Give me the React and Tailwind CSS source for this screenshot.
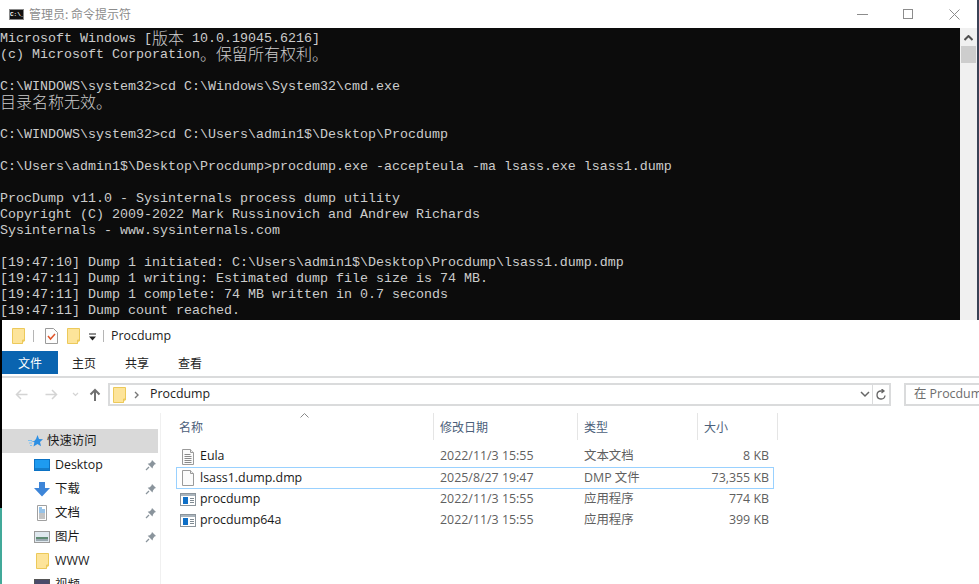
const mono = "font-['Liberation_Mono','Noto_Sans_CJK_SC',monospace]";

function C({ children }) {
  return <span className="font-['Noto_Sans_CJK_SC',sans-serif] text-[16px] leading-[0px] font-light align-[-1.5px]">{children}</span>;
}

const Line = ({ children }) => (
  <div className="h-4 leading-4 whitespace-pre">{children || " "}</div>
);

function Folder() {
  return (
    <svg width="13" height="16" viewBox="0 0 13 16" className="shrink-0 block">
      <path d="M.5.500h12v12.500h-2v2.500h-10z" fill="#fde49a" stroke="#ecc95a" />
      <path d="M10.500 15.500v-3.500h2" fill="#f3cf62" stroke="#ecc95a" />
    </svg>
  );
}

function Pin() {
  return (
    <svg width="12" height="12" viewBox="0 0 12 12" className="shrink-0">
      <path d="M7 1l4 4-1.500.5L8 7.500 7.500 9.500 2.700 4.700 4.800 4.200 6.500 2.500z" fill="#8a949c" />
      <path d="M4 8L1 11" stroke="#8a949c" strokeWidth="1.300" />
    </svg>
  );
}

function DocIcon({ lines }) {
  return (
    <svg width="14" height="16" viewBox="0 0 14 16" className="shrink-0">
      <path d="M1.500 .5h8l3 3v12h-11z" fill="#fbfbfb" stroke="#9a9a9a" />
      <path d="M9.500 .5v3h3" fill="#eee" stroke="#9a9a9a" />
      {lines && <path d="M3.500 5.500h6M3.500 7.500h7M3.500 9.500h7M3.500 11.500h7M3.500 13.500h7" stroke="#8a8a8a" />}
    </svg>
  );
}

function ExeIcon() {
  return (
    <svg width="16" height="13" viewBox="0 0 16 13" className="shrink-0">
      <rect x=".5" y=".5" width="15" height="12" fill="#fff" stroke="#8b949b" />
      <rect x="1" y="1" width="14" height="2" fill="#aab4bc" />
      <rect x="3" y="4" width="5" height="7" fill="#0f6fc6" />
      <path d="M10 5.500h4M10 7.500h4M10 9.500h4" stroke="#7f8a92" />
    </svg>
  );
}

const files = [
  ["Eula", "2022/11/3 15:55", "文本文档", "8 KB", "txt"],
  ["lsass1.dump.dmp", "2025/8/27 19:47", "DMP 文件", "73,355 KB", "dmp"],
  ["procdump", "2022/11/3 15:55", "应用程序", "774 KB", "exe"],
  ["procdump64a", "2022/11/3 15:55", "应用程序", "399 KB", "exe"],
];

function Nav({ icon, label, pin, active }) {
  return (
    <div className={`h-6 w-[156px] flex items-center ${active ? "bg-[#d9d9d9] pl-[26px]" : "pl-[32px]"}`}>
      <span className={`${active ? "w-[19px]" : "w-[21px]"} flex items-center`}>{icon}</span>
      <span className="flex-1 text-[#1a1a1a] text-[12.4px] leading-6 whitespace-nowrap">{label}</span>
      {pin && <span className="mr-px"><Pin /></span>}
    </div>
  );
}

export default function App() {
  return (
    <div className="w-[979px] h-[584px] overflow-hidden bg-white font-['Open_Sans','Noto_Sans_CJK_SC',sans-serif]">
      <div className="flex h-[320px]">
        <div className="w-[977px] flex flex-col bg-white">
          <div className="h-[28px] flex items-center shrink-0">
            <div className="ml-[9px] w-[15px] h-[11px] bg-[#111] border border-[#888] text-white text-[6px] leading-[9px] font-bold font-['Liberation_Mono',monospace] overflow-hidden">
              C:\_
            </div>
            <span className="ml-[5px] text-[12px] text-[#8c8c8c] font-['Noto_Sans_CJK_SC',sans-serif]">管理员: 命令提示符</span>
            <div className="ml-auto flex items-center">
              <div className="w-[11px] h-px bg-[#8c8c8c] mr-[35px]" />
              <div className="w-[10px] h-[10px] border border-[#8c8c8c] mr-[36px]" />
              <svg width="11" height="11" viewBox="0 0 11 11" className="mr-[17px]">
                <path d="M.5.500l10 10M10.500.500l-10 10" stroke="#8c8c8c" />
              </svg>
            </div>
          </div>
          <div className="flex-1 flex min-h-0">
            <div className={`w-[960px] bg-[#0c0c0c] text-[#cccccc] text-[13.33px] pt-[3px] overflow-hidden ${mono}`}>
              <Line>Microsoft Windows [<C>版本</C> 10.0.19045.6216]</Line>
              <Line>(c) Microsoft Corporation<C>。保留所有权利。</C></Line>
              <Line />
              <Line>{"C:\\WINDOWS\\system32>cd C:\\Windows\\System32\\cmd.exe"}</Line>
              <Line><C>目录名称无效。</C></Line>
              <Line />
              <Line>{"C:\\WINDOWS\\system32>cd C:\\Users\\admin1$\\Desktop\\Procdump"}</Line>
              <Line />
              <Line>{"C:\\Users\\admin1$\\Desktop\\Procdump>procdump.exe -accepteula -ma lsass.exe lsass1.dump"}</Line>
              <Line />
              <Line>ProcDump v11.0 - Sysinternals process dump utility</Line>
              <Line>Copyright (C) 2009-2022 Mark Russinovich and Andrew Richards</Line>
              <Line>Sysinternals - www.sysinternals.com</Line>
              <Line />
              <Line>{"[19:47:10] Dump 1 initiated: C:\\Users\\admin1$\\Desktop\\Procdump\\lsass1.dump.dmp"}</Line>
              <Line>[19:47:11] Dump 1 writing: Estimated dump file size is 74 MB.</Line>
              <Line>[19:47:11] Dump 1 complete: 74 MB written in 0.7 seconds</Line>
              <Line>[19:47:11] Dump count reached.</Line>
            </div>
            <div className="w-[17px] bg-[#f0f0f0] flex flex-col items-center">
              <svg width="9" height="6" viewBox="0 0 9 6" className="mt-[7px]">
                <path d="M.5 5L4.500 1l4 4" fill="none" stroke="#505050" strokeWidth="2" />
              </svg>
              <div className="mt-[5px] w-[15px] h-[17px] bg-[#cdcdcd]" />
            </div>
          </div>
        </div>
        <div className="flex-1 bg-[#3b4256]" />
      </div>

      <div className="flex h-[264px]">
        <div className="w-[2px] flex flex-col">
          <div className="h-[188px] bg-black" />
          <div className="flex-1 bg-[#41a999]" />
        </div>
        <div className="flex-1 min-w-0 flex flex-col bg-white">
          <div className="h-[31px] flex items-center shrink-0">
            <span className="ml-[10px]"><Folder /></span>
            <div className="ml-[8px] w-px h-3 bg-[#b5b5b5]" />
            <span className="ml-[11px]">
              <svg width="13" height="16" viewBox="0 0 13 16" className="block">
                <path d="M.5 .5h8l4 4v11h-12z" fill="#fdfdfd" stroke="#9a9a9a" />
                <path d="M3 8l2.500 3 4.500-5" fill="none" stroke="#e0552a" strokeWidth="1.500" />
              </svg>
            </span>
            <span className="ml-[9px]"><Folder /></span>
            <svg width="9" height="9" viewBox="0 0 9 9" className="ml-[8px] mt-[3px]">
              <path d="M1 1h7" stroke="#222" />
              <path d="M1 3.500h7L4.500 7.500z" fill="#222" />
            </svg>
            <div className="ml-[6px] w-px h-3 bg-[#b5b5b5]" />
            <span className="ml-[7px] mt-px text-[12.4px] text-[#222]">Procdump</span>
          </div>
          <div className="h-[23px] flex items-center shrink-0 text-[12px] text-[#222] font-['Noto_Sans_CJK_SC',sans-serif]">
            <div className="w-[56px] h-full bg-[#0a64b0] text-white flex items-center justify-center">文件</div>
            <span className="ml-[14px]">主页</span>
            <span className="ml-[29px]">共享</span>
            <span className="ml-[29px]">查看</span>
          </div>
          <div className="h-[2px] mt-[2px] bg-[#dadbdc] shrink-0" />
          <div className="h-[23px] mt-[5px] flex items-center shrink-0">
            <svg width="13" height="11" viewBox="0 0 13 11" className="ml-[13px]">
              <path d="M12.500 5.500h-11M6 1L1.500 5.500 6 10" fill="none" stroke="#d4d4d4" strokeWidth="1.500" />
            </svg>
            <svg width="13" height="11" viewBox="0 0 13 11" className="ml-[17px]">
              <path d="M.5 5.500h11M7 1l4.500 4.500L7 10" fill="none" stroke="#d4d4d4" strokeWidth="1.500" />
            </svg>
            <svg width="7" height="5" viewBox="0 0 7 5" className="ml-[14px]">
              <path d="M1 1l2.500 2.500L6 1" fill="none" stroke="#d4d4d4" strokeWidth="1.200" />
            </svg>
            <svg width="12" height="13" viewBox="0 0 12 13" className="ml-[10px]">
              <path d="M6 13V2M1.500 6.500L6 2l4.500 4.500" fill="none" stroke="#707070" strokeWidth="2" />
            </svg>
            <div className="ml-[7px] w-[783px] h-full border-2 border-[#dadbdc] flex items-center shrink-0">
              <span className="ml-[3px]"><Folder /></span>
              <svg width="5" height="8" viewBox="0 0 5 8" className="ml-[8px]">
                <path d="M1 1l3 3-3 3" fill="none" stroke="#777" strokeWidth="1.400" />
              </svg>
              <span className="ml-[11px] text-[12.4px] text-[#222]">Procdump</span>
              <svg width="10" height="7" viewBox="0 0 10 7" className="ml-auto mr-[2px]">
                <path d="M1 1l4 4 4-4" fill="none" stroke="#666" strokeWidth="1.500" />
              </svg>
              <div className="w-px h-full bg-[#dadbdc]" />
              <svg width="12" height="12" viewBox="0 0 12 12" className="mx-[2px]">
                <path d="M10 6.500a4 4 0 1 1-4-4.500h3M6.500 0L9 2 6.500 4" fill="none" stroke="#666" strokeWidth="1.300" />
              </svg>
            </div>
            <div className="ml-[13px] flex-1 h-full border-2 border-[#dadbdc] border-r-0 flex items-center pl-[8px] overflow-hidden text-[12.4px] text-[#6d6d6d] whitespace-nowrap">
              在 Procdump
            </div>
          </div>

          <div className="flex-1 flex min-h-0 mt-[7px]">
            <div className="w-[158px] shrink-0 pt-[16px] overflow-hidden">
              <Nav
                active
                label="快速访问"
                icon={
                  <svg width="15" height="15" viewBox="0 0 15 15">
                    <path d="M9.500 1l1.500 4 4 .3-3 2.700 1 4.300-3.500-2.300-4 2.600.9-4.300L3 7.200h3L8 5z" fill="#2d8fe3" />
                    <path d="M0 6.500h4M1 9h3M2 11.500h2" stroke="#7cc0f2" />
                  </svg>
                }
              />
              <Nav
                pin
                label="Desktop"
                icon={
                  <svg width="16" height="12" viewBox="0 0 16 12">
                    <rect x=".5" y=".5" width="15" height="11" fill="#1e9bf0" stroke="#0b72c4" />
                    <path d="M1 10h14" stroke="#0b5ea5" />
                  </svg>
                }
              />
              <Nav
                pin
                label="下载"
                icon={
                  <svg width="16" height="16" viewBox="0 0 16 16">
                    <path d="M5 1h6v6h5l-8 8.500L0 7h5z" fill="#3d85d8" />
                  </svg>
                }
              />
              <Nav
                pin
                label="文档"
                icon={
                  <svg width="16" height="16" viewBox="0 0 16 16">
                    <path d="M3.500.5h9v15h-9z" fill="#fff" stroke="#a0a0a0" />
                    <path d="M5 3h3M5 5h6M5 7h6" stroke="#2e86d1" />
                    <path d="M5 9h6M5 11h6M5 13h6" stroke="#888" />
                  </svg>
                }
              />
              <Nav
                pin
                label="图片"
                icon={
                  <svg width="16" height="12" viewBox="0 0 16 12">
                    <rect x=".5" y=".5" width="15" height="11" fill="#dfe8ee" stroke="#9a9a9a" />
                    <rect x="2" y="6" width="12" height="2" fill="#5f8b73" />
                    <rect x="2" y="8" width="12" height="2" fill="#9aa8b0" />
                  </svg>
                }
              />
              <Nav label="WWW" icon={<span className="ml-[2px]"><Folder /></span>} />
              <Nav
                label="视频"
                icon={
                  <svg width="16" height="12" viewBox="0 0 16 12">
                    <rect x=".5" y=".5" width="15" height="11" fill="#4a4a6a" stroke="#555" />
                  </svg>
                }
              />
            </div>
            <div className="w-px bg-[#f0f0f0] shrink-0" />
            <div className="flex-1 min-w-0 pl-[15px]">
              <div className="h-[27px] mt-0 flex text-[12px] text-[#4c607a] font-['Noto_Sans_CJK_SC',sans-serif] relative">
                <svg width="9" height="5" viewBox="0 0 9 5" className="absolute left-[124px] top-0">
                  <path d="M.5 4.500L4.500 .5l4 4" fill="none" stroke="#888" />
                </svg>
                <div className="w-[258px] pl-[3px] flex items-center border-r border-[#e5e5e5]">名称</div>
                <div className="w-[144px] pl-[6px] flex items-center border-r border-[#e5e5e5]">修改日期</div>
                <div className="w-[120px] pl-[6px] flex items-center border-r border-[#e5e5e5]">类型</div>
                <div className="w-[80px] pl-[6px] flex items-center border-r border-[#e5e5e5]">大小</div>
              </div>
              <div className="mt-[6px] text-[12.4px]">
                {files.map(([name, date, type, size, kind]) => (
                  <div
                    key={name}
                    className={`w-[598px] h-[21.330px] flex items-center border ${
                      kind === "dmp" ? "border-[#99d1ff]" : "border-transparent"
                    }`}
                  >
                    <span className="w-[22px] mr-px flex items-center justify-center shrink-0">
                      {kind === "exe" ? <ExeIcon /> : <DocIcon lines={kind === "txt"} />}
                    </span>
                    <span className="w-[240px] text-[#1a1a1a] whitespace-nowrap">{name}</span>
                    <span className="w-[144px] text-[#5f5f5f] whitespace-nowrap">{date}</span>
                    <span className="w-[100px] text-[#5f5f5f] whitespace-nowrap">{type}</span>
                    <span className="w-[85px] text-right text-[#5f5f5f] whitespace-nowrap">{size}</span>
                  </div>
                ))}
              </div>
            </div>
          </div>
        </div>
      </div>
    </div>
  );
}
